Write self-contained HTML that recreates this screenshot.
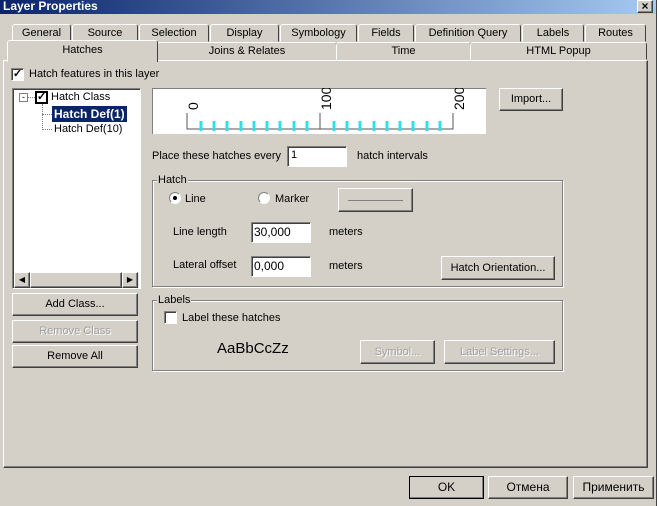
<!DOCTYPE html>
<html><head><meta charset="utf-8"><style>
*{box-sizing:border-box}
body{margin:0;width:660px;height:506px;overflow:hidden;background:#fff;font-family:"Liberation Sans",sans-serif;font-size:11px;color:#000}
#dlg{position:absolute;left:0;top:0;width:657px;height:506px;background:#d4d0c8;border-right:1px solid #404040}
.a{position:absolute}
#title{left:0;top:0;width:656px;height:14px;background:linear-gradient(90deg,#0a246a,#a6caf0);color:#fff;font-weight:bold;font-size:12px;line-height:12px;padding-left:3px}
.tab{position:absolute;height:18px;border:1px solid;border-color:#fff #404040 transparent #fff;border-radius:3px 3px 0 0;text-align:center;line-height:16px;background:#d4d0c8}
.raised{border:1px solid;border-color:#fff #404040 #404040 #fff;box-shadow:inset -1px -1px #808080}
.sunk{border:1px solid;border-color:#808080 #fff #fff #808080;box-shadow:inset 1px 1px #404040;background:#fff}
.btn{position:absolute;text-align:center;border:1px solid;border-color:#fff #404040 #404040 #fff;box-shadow:inset -1px -1px #808080;background:#d4d0c8}
.dis{color:#a0a0a0;text-shadow:1px 1px #fff}
.grp{position:absolute;border:1px solid #808080;box-shadow:1px 1px #fff,inset 1px 1px #fff}
.gl{position:absolute;top:-8px;left:6px;background:#d4d0c8;padding:0 1px}
.chk{position:absolute;width:13px;height:13px;background:#fff;border:1px solid;border-color:#808080 #fff #fff #808080;box-shadow:inset 1px 1px #404040;font-size:11px;line-height:10px;text-align:center;font-weight:bold}
.rad{position:absolute;width:12px;height:12px;border-radius:50%;background:#fff;border:1px solid;border-color:#808080 #fff #fff #808080}
</style></head><body><div id="dlg">
<div id="title" class="a">Layer Properties</div>
<div class="btn" style="left:637px;top:0;width:16px;height:13px;line-height:11px;font-weight:bold;font-size:12px">×</div>

<div class="tab" style="left:12px;top:24px;width:59px">General</div>
<div class="tab" style="left:72px;top:24px;width:66px">Source</div>
<div class="tab" style="left:139px;top:24px;width:70px">Selection</div>
<div class="tab" style="left:210px;top:24px;width:69px">Display</div>
<div class="tab" style="left:280px;top:24px;width:77px">Symbology</div>
<div class="tab" style="left:358px;top:24px;width:56px">Fields</div>
<div class="tab" style="left:415px;top:24px;width:106px">Definition Query</div>
<div class="tab" style="left:522px;top:24px;width:62px">Labels</div>
<div class="tab" style="left:585px;top:24px;width:61px">Routes</div>

<div class="a" style="left:3px;top:60px;width:645px;height:408px;border:1px solid;border-color:#fff #404040 #404040 #fff;box-shadow:inset -1px -1px #808080"></div>
<div class="tab" style="left:157px;top:42px;width:180px;height:18px">Joins &amp; Relates</div>
<div class="tab" style="left:336px;top:42px;width:135px;height:18px">Time</div>
<div class="tab" style="left:470px;top:42px;width:177px;height:18px">HTML Popup</div>
<div class="tab" style="left:7px;top:40px;width:151px;height:22px;border-bottom:none;line-height:18px;z-index:2">Hatches</div>

<div class="chk" style="left:11px;top:68px">✓</div>
<div class="a" style="left:29px;top:68px">Hatch features in this layer</div>

<!-- tree -->
<div class="a sunk" style="left:12px;top:88px;width:129px;height:201px"></div>
<div class="a" style="left:19px;top:93px;width:9px;height:9px;border:1px solid #808080;background:#fff;font-size:9px;line-height:6px;text-align:center">-</div>
<div class="a" style="left:28px;top:97px;width:7px;border-top:1px dotted #808080"></div>
<div class="a" style="left:42px;top:104px;height:26px;border-left:1px dotted #808080"></div>
<div class="a" style="left:42px;top:114px;width:10px;border-top:1px dotted #808080"></div>
<div class="a" style="left:42px;top:129px;width:10px;border-top:1px dotted #808080"></div>
<div class="a" style="left:35px;top:91px;width:13px;height:13px;border:2px solid #000;background:#fff;font-weight:bold;line-height:9px;text-align:center;font-size:11px">✓</div>
<div class="a" style="left:51px;top:91px">Hatch Class</div>
<div class="a" style="left:52px;top:106px;background:#0a246a;color:#fff;font-weight:bold;padding:1px 2px;font-size:12px">Hatch Def(1)</div>
<div class="a" style="left:54px;top:123px">Hatch Def(10)</div>
<div class="a" style="left:14px;top:272px;width:125px;height:16px;background:#e8e6e1"></div>
<div class="btn" style="left:14px;top:272px;width:16px;height:16px;font-size:8px;line-height:14px">◀</div>
<div class="btn" style="left:30px;top:272px;width:92px;height:16px"></div>
<div class="btn" style="left:122px;top:272px;width:16px;height:16px;font-size:8px;line-height:14px">▶</div>

<div class="btn" style="left:12px;top:293px;width:126px;height:23px;line-height:21px">Add Class...</div>
<div class="btn dis" style="left:12px;top:320px;width:126px;height:23px;line-height:21px">Remove Class</div>
<div class="btn" style="left:12px;top:345px;width:126px;height:23px;line-height:21px">Remove All</div>

<!-- preview -->
<div class="a" style="left:152px;top:88px;width:334px;height:46px;background:#fff;border-top:1px solid #808080;border-left:1px solid #808080"></div>
<svg class="a" style="left:152px;top:88px" width="334" height="46">
<path d="M35 25V41H301V25M168 25V41" stroke="#555" stroke-width="1" fill="none"/>
<g stroke="#2ee0e8" stroke-width="3">
<path d="M49 33V43M62 33V43M75 33V43M89 33V43M102 33V43M115 33V43M128 33V43M142 33V43M155 33V43M182 33V43M195 33V43M208 33V43M222 33V43M235 33V43M248 33V43M261 33V43M275 33V43M288 33V43"/></g>
<text transform="translate(46,22) rotate(-90)" font-size="14" font-family="Liberation Sans">0</text>
<text transform="translate(179,22) rotate(-90)" font-size="14" font-family="Liberation Sans">100</text>
<text transform="translate(312,22) rotate(-90)" font-size="14" font-family="Liberation Sans">200</text>
</svg>
<div class="btn" style="left:499px;top:88px;width:64px;height:23px;line-height:21px">Import...</div>

<div class="a" style="left:152px;top:150px">Place these hatches every</div>
<div class="a sunk" style="left:287px;top:146px;width:60px;height:21px;padding:2px 3px">1</div>
<div class="a" style="left:357px;top:150px">hatch intervals</div>

<div class="grp" style="left:152px;top:180px;width:411px;height:107px"><span class="gl" style="top:-7px;left:4px">Hatch</span></div>
<div class="rad" style="left:169px;top:192px"><div class="a" style="left:3px;top:3px;width:4px;height:4px;background:#000;border-radius:50%"></div></div>
<div class="a" style="left:185px;top:193px">Line</div>
<div class="rad" style="left:258px;top:192px"></div>
<div class="a" style="left:275px;top:193px">Marker</div>
<div class="btn" style="left:338px;top:188px;width:75px;height:24px"><div class="a" style="left:9px;top:11px;width:55px;border-top:1px solid #808080"></div></div>
<div class="a" style="left:173px;top:226px">Line length</div>
<div class="a sunk" style="left:251px;top:222px;width:60px;height:21px;padding:2px 2px;font-size:12px">30,000</div>
<div class="a" style="left:329px;top:226px">meters</div>
<div class="a" style="left:173px;top:259px">Lateral offset</div>
<div class="a sunk" style="left:251px;top:256px;width:60px;height:21px;padding:2px 2px;font-size:12px">0,000</div>
<div class="a" style="left:329px;top:260px">meters</div>
<div class="btn" style="left:441px;top:256px;width:114px;height:24px;line-height:22px">Hatch Orientation...</div>

<div class="grp" style="left:152px;top:300px;width:411px;height:71px"><span class="gl" style="top:-7px;left:4px">Labels</span></div>
<div class="chk" style="left:164px;top:311px"></div>
<div class="a" style="left:182px;top:312px">Label these hatches</div>
<div class="a" style="left:217px;top:340px;font-size:15px">AaBbCcZz</div>
<div class="btn dis" style="left:360px;top:340px;width:75px;height:24px;line-height:22px">Symbol...</div>
<div class="btn dis" style="left:444px;top:340px;width:111px;height:24px;line-height:22px">Label Settings...</div>

<div class="btn" style="left:409px;top:476px;width:75px;height:23px;line-height:21px;outline:1px solid #000;outline-offset:-1px;font-size:12px">OK</div>
<div class="btn" style="left:488px;top:476px;width:80px;height:23px;line-height:21px;font-size:12px">Отмена</div>
<div class="btn" style="left:573px;top:476px;width:81px;height:23px;line-height:21px;font-size:12px">Применить</div>
</div></body></html>
